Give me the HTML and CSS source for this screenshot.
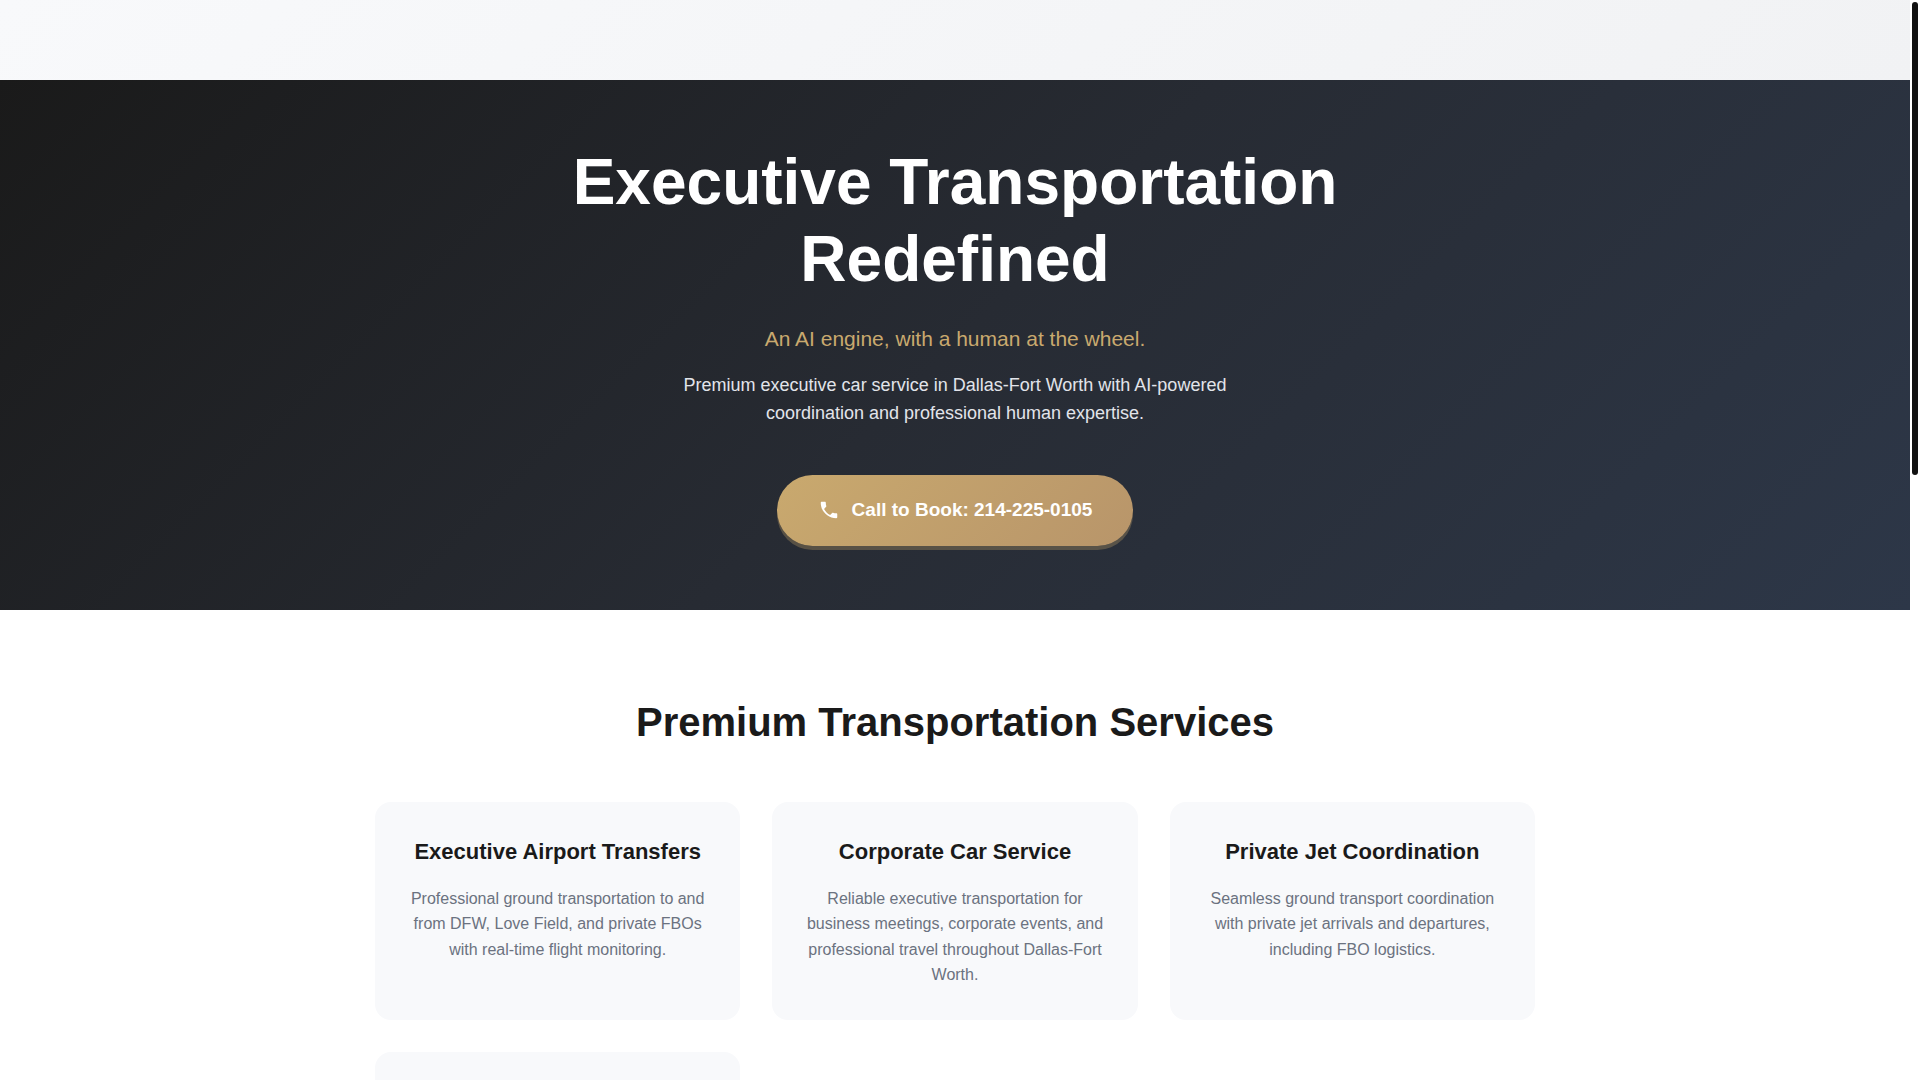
FILE: index.html
```html
<!DOCTYPE html>
<html lang="en">
<head>
	<meta charset="utf-8">
	<meta name="viewport" content="width=device-width, initial-scale=1">
	<title>Executive Transportation</title>
	<link rel="stylesheet" href="styles.css">
</head>

<body>
	<header class="topbar"></header>

	<main>
		<section class="hero">
			<div class="hero-content">
				<h1>Executive Transportation Redefined</h1>
				<p class="tagline">An AI engine, with a human at the wheel.</p>
				<p class="intro">Premium executive car service in Dallas-Fort Worth with AI-powered coordination and professional human expertise.</p>
				<a class="cta" href="tel:214-225-0105">
					<svg class="cta-icon" viewBox="0 0 24 24" aria-hidden="true">
						<path d="M6.62 10.79c1.44 2.83 3.76 5.14 6.59 6.59l2.2-2.2c.27-.27.67-.36 1.02-.24 1.12.37 2.33.57 3.57.57.55 0 1 .45 1 1V20c0 .55-.45 1-1 1-9.39 0-17-7.61-17-17 0-.55.45-1 1-1h3.5c.55 0 1 .45 1 1 0 1.25.2 2.45.57 3.57.11.35.03.74-.25 1.02l-2.2 2.2z"/>
					</svg>
					Call to Book: 214-225-0105
				</a>
			</div>
		</section>

		<section class="services">
			<div class="container">
				<h2>Premium Transportation Services</h2>
				<div class="services-grid">
					<article class="card">
						<h3>Executive Airport Transfers</h3>
						<p>Professional ground transportation to and from DFW, Love Field, and private FBOs with real-time flight monitoring.</p>
					</article>
					<article class="card">
						<h3>Corporate Car Service</h3>
						<p>Reliable executive transportation for business meetings, corporate events, and professional travel throughout Dallas-Fort Worth.</p>
					</article>
					<article class="card">
						<h3>Private Jet Coordination</h3>
						<p>Seamless ground transport coordination with private jet arrivals and departures, including FBO logistics.</p>
					</article>
					<article class="card"></article>
				</div>
			</div>
		</section>
	</main>

	<div class="scroll-track" aria-hidden="true">
		<div class="scroll-thumb"></div>
	</div>
</body>
</html>
```
FILE: styles.css
```css
* {
	margin: 0;
	padding: 0;
	box-sizing: border-box;
}

html {
	height: 100%;
	overflow: hidden;
}

body {
	height: 100%;
	overflow: hidden;
	padding-right: 10px;
	font-family: "Liberation Sans", Arial, sans-serif;
	font-size: 16px;
	line-height: 1.6;
	color: #1a1a1a;
	background: #fff;
}

.topbar {
	height: 80px;
	background: linear-gradient(135deg, #f8f9fb 0%, #f1f2f4 100%);
}

.hero {
	padding: 64px 20px;
	text-align: center;
	color: #fff;
	background: linear-gradient(135deg, #1a1a1a 0%, #272b33 50%, #2d3748 100%);
}

.hero-content {
	max-width: 800px;
	margin: 0 auto;
}

.hero h1 {
	margin-bottom: 24px;
	font-size: 64px;
	line-height: 1.2;
}

.tagline {
	margin-bottom: 16px;
	font-size: 21px;
	color: #c9a96e;
}

.intro {
	max-width: 600px;
	margin: 0 auto 48px;
	font-size: 18px;
	line-height: 28px;
	color: #e2e4ea;
}

.cta {
	display: inline-flex;
	align-items: center;
	gap: 12px;
	padding: 20px 41px;
	border-radius: 50px;
	font-size: 19px;
	font-weight: bold;
	color: #fff;
	text-decoration: none;
	vertical-align: top;
	background: linear-gradient(135deg, #c9a96e 0%, #b8956a 100%);
	box-shadow: 0 4px 0 rgba(201, 169, 110, 0.3);
}

.cta-icon {
	width: 22px;
	height: 22px;
	fill: currentColor;
}

.services {
	padding: 80px 0;
}

.container {
	max-width: 1200px;
	margin: 0 auto;
	padding: 0 20px;
}

.services h2 {
	margin-bottom: 48px;
	font-size: 40px;
	text-align: center;
}

.services-grid {
	display: grid;
	grid-template-columns: repeat(3, 1fr);
	gap: 32px;
}

.card {
	min-height: 218px;
	padding: 32px;
	border-radius: 16px;
	text-align: center;
	background: #f8f9fb;
}

.card h3 {
	margin-bottom: 16px;
	font-size: 22px;
	line-height: 36px;
}

.card p {
	color: #6b7280;
}

/* slim page scrollbar */
.scroll-track {
	position: fixed;
	top: 0;
	right: 0;
	bottom: 0;
	width: 10px;
	padding: 2px;
	background: #fff;
}

.scroll-thumb {
	height: 44%;
	border-radius: 3px;
	background: #111;
}
```
